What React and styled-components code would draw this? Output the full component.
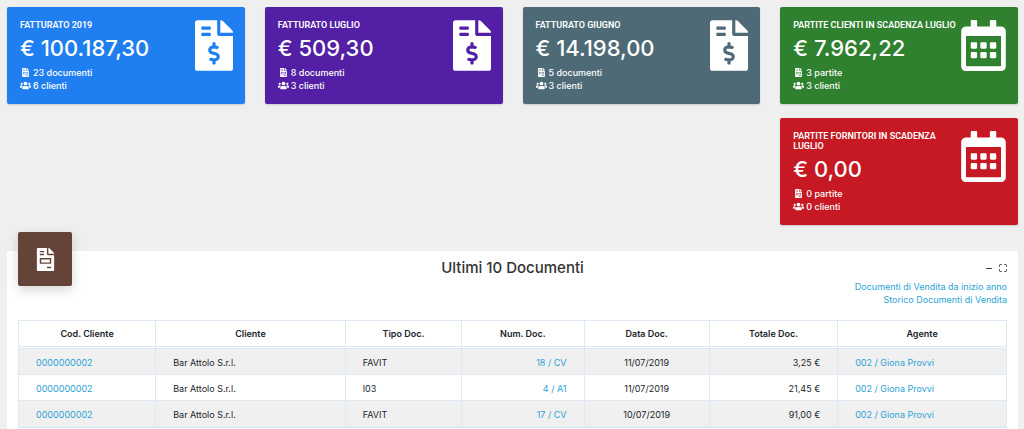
import React from 'react';
import styled, { createGlobalStyle } from 'styled-components';
import { FaFileInvoice, FaFileInvoiceDollar, FaRegCalendarAlt, FaUsers } from 'react-icons/fa';

const GlobalStyle = createGlobalStyle`
  *, *::before, *::after { box-sizing: border-box; }
  body {
    margin: 0;
    background: #efefef;
    color: #212529;
    font-family: Inter, "Liberation Sans", sans-serif;
    font-size: 9px;
    line-height: 13px;
  }
`;

const Page = styled.main`
  display: flex;
  flex-direction: column;
  min-height: 100vh;
  padding: 7px 6px 0 7px;
`;

const Cards = styled.section`
  display: grid;
  grid-template-columns: repeat(4, minmax(0, 1fr));
  align-items: start;
  gap: 14px 20px;
`;

const Card = styled.article`
  grid-column: ${({ $column }) => $column};
  display: flex;
  justify-content: space-between;
  padding: 13px 12px 12px 13px;
  border-radius: 2px;
  background: ${({ $color }) => $color};
  box-shadow: 0 1px 2px rgba(0, 0, 0, 0.15);
  color: #fff;
`;

const CardText = styled.div`
  flex: 1;
  min-width: 0;
`;

const CardTitle = styled.h2`
  margin: 0;
  font-family: Roboto, Inter, sans-serif;
  font-size: 9px;
  font-weight: 600;
  line-height: 10px;
  text-transform: uppercase;
  white-space: ${({ $wrap }) => ($wrap ? 'normal' : 'nowrap')};
`;

const Amount = styled.p`
  margin: 4px 0;
  font-size: 22px;
  font-weight: 500;
  line-height: 28px;
`;

const Stat = styled.p`
  display: flex;
  align-items: center;
  gap: 2px;
  margin: 0;
  font-weight: 500;
`;

const StatIcon = styled.span`
  display: flex;
  justify-content: center;
  width: 11px;
  font-size: ${({ $size }) => $size}px;
`;

const CardIcon = styled.div`
  flex: none;
  width: ${({ $width }) => $width}px;

  svg {
    display: block;
    width: 100%;
    height: 51px;
  }
`;

const Panel = styled.section`
  flex: 1;
  margin-top: 26px;
  padding: 0 11px;
  background: #fff;
`;

const PanelHeader = styled.header`
  display: grid;
  grid-template-columns: 1fr auto 1fr;
  height: 29px;
`;

const Badge = styled.div`
  display: flex;
  align-items: center;
  justify-content: center;
  width: 54px;
  height: 54px;
  margin-top: -19px;
  border-radius: 2px;
  background: #654338;
  box-shadow: 0 4px 12px rgba(0, 0, 0, 0.16);
  color: #fff;
  font-size: 23px;
`;

const PanelTitle = styled.h1`
  margin: 7px 0 0;
  color: #333;
  font-size: 15px;
  font-weight: 500;
  line-height: 20px;
`;

const Tools = styled.div`
  display: flex;
  justify-content: flex-end;
  align-items: flex-start;
  gap: 6px;
  padding-top: 13px;
`;

const ToolButton = styled.button`
  display: flex;
  padding: 0;
  border: 0;
  background: none;
  color: #444;
`;

const Link = styled.a`
  color: #2ba3d6;
  text-decoration: none;
`;

const PanelLinks = styled.nav`
  display: flex;
  flex-direction: column;
  align-items: flex-end;
  margin-bottom: 14px;
`;

const Table = styled.table`
  width: 100%;
  table-layout: fixed;
  border: 1px solid #dfe9f3;
  border-collapse: separate;
  border-spacing: 0;
`;

const Column = styled.col`
  width: ${({ $share }) => $share}%;
`;

const HeadCell = styled.th`
  height: 28px;
  padding: 0;
  border-bottom: 3px double #dfe9f3;
  border-right: 1px solid #dfe9f3;
  font-weight: 600;
  text-align: center;

  &:last-child { border-right: 0; }
`;

const Row = styled.tr`
  background: ${({ $striped }) => ($striped ? '#f0f0f0' : '#fff')};
`;

const Cell = styled.td`
  padding: 7px 17px 5px;
  border-right: 1px solid #dfe9f3;
  border-bottom: 1px solid #dfe9f3;
  text-align: ${({ $align }) => $align || 'left'};

  &:last-child { border-right: 0; }
`;

const cards = [
  { title: 'Fatturato 2019', amount: '€ 100.187,30', docs: '23 documenti', people: '6 clienti', color: '#1f7ff0', Icon: FaFileInvoiceDollar, iconWidth: 38, column: 1 },
  { title: 'Fatturato luglio', amount: '€ 509,30', docs: '8 documenti', people: '3 clienti', color: '#521fa5', Icon: FaFileInvoiceDollar, iconWidth: 38, column: 2 },
  { title: 'Fatturato giugno', amount: '€ 14.198,00', docs: '5 documenti', people: '3 clienti', color: '#4e6a77', Icon: FaFileInvoiceDollar, iconWidth: 38, column: 3 },
  { title: 'Partite clienti in scadenza luglio', amount: '€ 7.962,22', docs: '3 partite', people: '3 clienti', color: '#2f812f', Icon: FaRegCalendarAlt, iconWidth: 45, column: 4 },
  { title: 'Partite fornitori in scadenza luglio', amount: '€ 0,00', docs: '0 partite', people: '0 clienti', color: '#c61923', Icon: FaRegCalendarAlt, iconWidth: 45, column: 4, wrap: true },
];

const columns = [
  ['Cod. Cliente', 13.9],
  ['Cliente', 19.2],
  ['Tipo Doc.', 11.8],
  ['Num. Doc.', 12.4],
  ['Data Doc.', 12.7],
  ['Totale Doc.', 13],
  ['Agente', 17],
];

const rows = [
  { code: '0000000002', client: 'Bar Attolo S.r.l.', type: 'FAVIT', number: '18 / CV', date: '11/07/2019', total: '3,25 €', agent: '002 / Giona Provvi' },
  { code: '0000000002', client: 'Bar Attolo S.r.l.', type: 'I03', number: '4 / A1', date: '11/07/2019', total: '21,45 €', agent: '002 / Giona Provvi' },
  { code: '0000000002', client: 'Bar Attolo S.r.l.', type: 'FAVIT', number: '17 / CV', date: '10/07/2019', total: '91,00 €', agent: '002 / Giona Provvi' },
];

function SummaryCard({ title, amount, docs, people, color, Icon, iconWidth, column, wrap }) {
  return (
    <Card $color={color} $column={column}>
      <CardText>
        <CardTitle $wrap={wrap}>{title}</CardTitle>
        <Amount>{amount}</Amount>
        <Stat><StatIcon $size={9}><FaFileInvoice /></StatIcon>{docs}</Stat>
        <Stat><StatIcon $size={11}><FaUsers /></StatIcon>{people}</Stat>
      </CardText>
      <CardIcon $width={iconWidth}><Icon /></CardIcon>
    </Card>
  );
}

export default function App() {
  return (
    <>
      <GlobalStyle />
      <Page>
        <Cards>
          {cards.map((card) => <SummaryCard key={card.title} {...card} />)}
        </Cards>
        <Panel>
          <PanelHeader>
            <Badge><FaFileInvoice /></Badge>
            <PanelTitle>Ultimi 10 Documenti</PanelTitle>
            <Tools>
              <ToolButton type="button" aria-label="Riduci">
                <svg width="8" height="8" viewBox="0 0 8 8" stroke="currentColor"><path d="M1 4.5h6" /></svg>
              </ToolButton>
              <ToolButton type="button" aria-label="Schermo intero">
                <svg width="8" height="8" viewBox="0 0 8 8" fill="none" stroke="currentColor">
                  <path d="M.5 2.8V1.2Q.5.5 1.2.5h1.6M5.2.5h1.6q.7 0 .7.7v1.6M7.5 5.2v1.6q0 .7-.7.7H5.2M2.8 7.5H1.2q-.7 0-.7-.7V5.2" />
                </svg>
              </ToolButton>
            </Tools>
          </PanelHeader>
          <PanelLinks>
            <Link href="#anno">Documenti di Vendita da inizio anno</Link>
            <Link href="#storico">Storico Documenti di Vendita</Link>
          </PanelLinks>
          <Table>
            <colgroup>
              {columns.map(([name, share]) => <Column key={name} $share={share} />)}
            </colgroup>
            <thead>
              <tr>{columns.map(([name]) => <HeadCell key={name} scope="col">{name}</HeadCell>)}</tr>
            </thead>
            <tbody>
              {rows.map((row, index) => (
                <Row key={row.number} $striped={index % 2 === 0}>
                  <Cell><Link href="#cliente">{row.code}</Link></Cell>
                  <Cell>{row.client}</Cell>
                  <Cell>{row.type}</Cell>
                  <Cell $align="right"><Link href="#documento">{row.number}</Link></Cell>
                  <Cell $align="center">{row.date}</Cell>
                  <Cell $align="right">{row.total}</Cell>
                  <Cell><Link href="#agente">{row.agent}</Link></Cell>
                </Row>
              ))}
            </tbody>
          </Table>
        </Panel>
      </Page>
    </>
  );
}
